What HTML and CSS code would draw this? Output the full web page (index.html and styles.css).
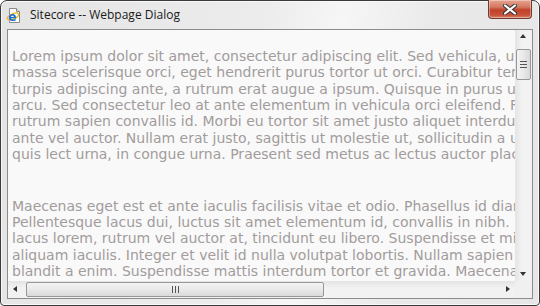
FILE: index.html
```html
<!DOCTYPE html>
<html lang="en">
<head>
  <meta charset="UTF-8">
  <title>Sitecore -- Webpage Dialog</title>
  <link rel="stylesheet" href="styles.css">
</head>
<body>

  <div class="window">
    <div class="titlebar">
      <svg class="app-icon" width="16" height="16" viewBox="0 0 16 16">
        <path d="M3.5 1.5 H10.5 L13.5 4.5 V15.5 H3.5 Z" fill="#fff" stroke="#8a8a8a"/>
        <path d="M10.5 1.5 V4.5 H13.5" fill="#e6e6e6" stroke="#8a8a8a"/>
        <ellipse cx="7" cy="9.5" rx="6" ry="2.6" fill="none" stroke="#f2b500" stroke-width="1.2" transform="rotate(-25 7 9.5)"/>
        <text x="2.2" y="13.5" font-family="DejaVu Sans, sans-serif" font-size="12" font-weight="bold" fill="#1a6fd0">e</text>
      </svg>
      <span class="title">Sitecore -- Webpage Dialog</span>
      <div class="close">
        <svg width="14" height="11" viewBox="0 0 14 11">
          <path d="M2 1.5 L12 9.5 M12 1.5 L2 9.5" stroke="#3a3a3a" stroke-width="4.2" stroke-linecap="round"/>
          <path d="M2 1.5 L12 9.5 M12 1.5 L2 9.5" stroke="#fff" stroke-width="2.2" stroke-linecap="round"/>
        </svg>
      </div>
    </div>

    <div class="frame">
      <div class="viewport">
        <div class="page">
          <p>
            <span>Lorem ipsum dolor sit amet, consectetur adipiscing elit. Sed vehicula, ut</span>
            <span>massa scelerisque orci, eget hendrerit purus tortor ut orci. Curabitur tempus</span>
            <span>turpis adipiscing ante, a rutrum erat augue a ipsum. Quisque in purus ut</span>
            <span>arcu. Sed consectetur leo at ante elementum in vehicula orci eleifend. Fusce</span>
            <span>rutrum sapien convallis id. Morbi eu tortor sit amet justo aliquet interdum</span>
            <span>ante vel auctor. Nullam erat justo, sagittis ut molestie ut, sollicitudin a ut</span>
            <span>quis lect urna, in congue urna. Praesent sed metus ac lectus auctor placerat.</span>
          </p>
          <p>
            <span>Maecenas eget est et ante iaculis facilisis vitae et odio. Phasellus id diam</span>
            <span>Pellentesque lacus dui, luctus sit amet elementum id, convallis in nibh.</span>
            <span>lacus lorem, rutrum vel auctor at, tincidunt eu libero. Suspendisse et mi</span>
            <span>aliquam iaculis. Integer et velit id nulla volutpat lobortis. Nullam sapien</span>
            <span>blandit a enim. Suspendisse mattis interdum tortor et gravida. Maecenas</span>
          </p>
        </div>
      </div>

      <div class="vscroll">
        <div class="arrow up"></div>
        <div class="vtrack">
          <div class="vthumb"><span class="grip"></span></div>
        </div>
        <div class="arrow down"></div>
      </div>

      <div class="hscroll">
        <div class="arrow left"></div>
        <div class="htrack">
          <div class="hthumb"><span class="grip"></span></div>
        </div>
        <div class="arrow right"></div>
      </div>

      <div class="corner"></div>
    </div>
  </div>

</body>
</html>
```

FILE: styles.css
```css
body {
  margin: 0;
  width: 540px;
  height: 306px;
  overflow: hidden;
  background-color: #fff;
  font-family: "DejaVu Sans", Verdana, sans-serif;
}

.window {
  box-sizing: border-box;
  width: 540px;
  height: 306px;
  border: 1px solid #3b3b3b;
  border-radius: 7px 7px 4px 4px;
  background: linear-gradient(100deg, #e4e4e4 0%, #ececec 45%, #f6f6f6 58%, #e9e9e9 75%, #e6e6e6 100%);
  box-shadow: inset 0 0 0 1px #f8f8f8;
  display: flex;
  flex-direction: column;
}

.titlebar {
  height: 28px;
  display: flex;
  align-items: flex-start;
  flex-shrink: 0;
}

.app-icon {
  margin: 6px 0 0 5px;
}

.title {
  margin: 6px 0 0 8px;
  font-family: "Open Sans", "Noto Sans", sans-serif;
  font-size: 12px;
  color: #1a1a1a;
  line-height: 16px;
}

.close {
  margin: -1px 7px 0 auto;
  width: 44px;
  height: 19px;
  box-sizing: border-box;
  border: 1px solid #6e3a32;
  border-top: none;
  border-radius: 0 0 4px 4px;
  background: linear-gradient(#e8a592 0%, #d27760 40%, #c0412a 55%, #c8523a 85%, #d88a6f 100%);
  box-shadow: inset 0 0 0 1px rgba(255, 255, 255, 0.35);
  display: flex;
  justify-content: center;
  align-items: center;
}

.frame {
  flex: 1;
  margin: 0 6px 6px 6px;
  border: 1px solid #8c8c8c;
  background-color: #f9f9f9;
  display: grid;
  grid-template-columns: 1fr 17px;
  grid-template-rows: 1fr 17px;
  overflow: hidden;
}

.viewport {
  overflow: hidden;
}

.page {
  padding: 18px 0 0 4px;
  color: #a29c9c;
  font-size: 14px;
  line-height: 16.33px;
}

.page p {
  margin: 0 0 35.5px 0;
}

.page span {
  display: block;
  white-space: nowrap;
}

/* scrollbars */

.vscroll {
  background: linear-gradient(90deg, #e4e4e4, #f2f2f2 40%, #f2f2f2);
  display: flex;
  flex-direction: column;
}

.hscroll {
  background: linear-gradient(#e4e4e4, #f2f2f2 40%, #f2f2f2);
  display: flex;
}

.corner {
  background-color: #f0f0f0;
}

.arrow {
  width: 17px;
  height: 17px;
  flex-shrink: 0;
  position: relative;
}

.arrow::after {
  content: "";
  position: absolute;
  width: 0;
  height: 0;
  border: 3px solid transparent;
}

.arrow.up::after {
  left: 5px;
  top: 4px;
  border-bottom: 4px solid #333;
  border-top: none;
}

.arrow.down::after {
  left: 5px;
  top: 8px;
  border-top: 4px solid #333;
  border-bottom: none;
}

.arrow.left::after {
  left: 5px;
  top: 5px;
  border-right: 4px solid #333;
  border-left: none;
}

.arrow.right::after {
  left: 8px;
  top: 5px;
  border-left: 4px solid #333;
  border-right: none;
}

.vtrack {
  flex: 1;
  padding: 2px 1px 0 1px;
}

.vthumb {
  height: 31px;
  box-sizing: border-box;
  border: 1px solid #979797;
  border-radius: 2px;
  background: linear-gradient(90deg, #f3f3f3, #e9e9e9 50%, #d9d9d9);
  display: flex;
  justify-content: center;
  align-items: center;
}

.vthumb .grip {
  width: 7px;
  height: 5px;
  border-top: 1px solid #555;
  border-bottom: 1px solid #555;
  background: linear-gradient(transparent 2px, #555 2px, #555 3px, transparent 3px);
}

.htrack {
  flex: 1;
  padding: 1px 0 1px 1px;
}

.hthumb {
  width: 298px;
  height: 15px;
  box-sizing: border-box;
  border: 1px solid #979797;
  border-radius: 2px;
  background: linear-gradient(#f3f3f3, #e9e9e9 50%, #d9d9d9);
  display: flex;
  justify-content: center;
  align-items: center;
}

.hthumb .grip {
  width: 5px;
  height: 7px;
  border-left: 1px solid #555;
  border-right: 1px solid #555;
  background: linear-gradient(90deg, transparent 2px, #555 2px, #555 3px, transparent 3px);
}
```
